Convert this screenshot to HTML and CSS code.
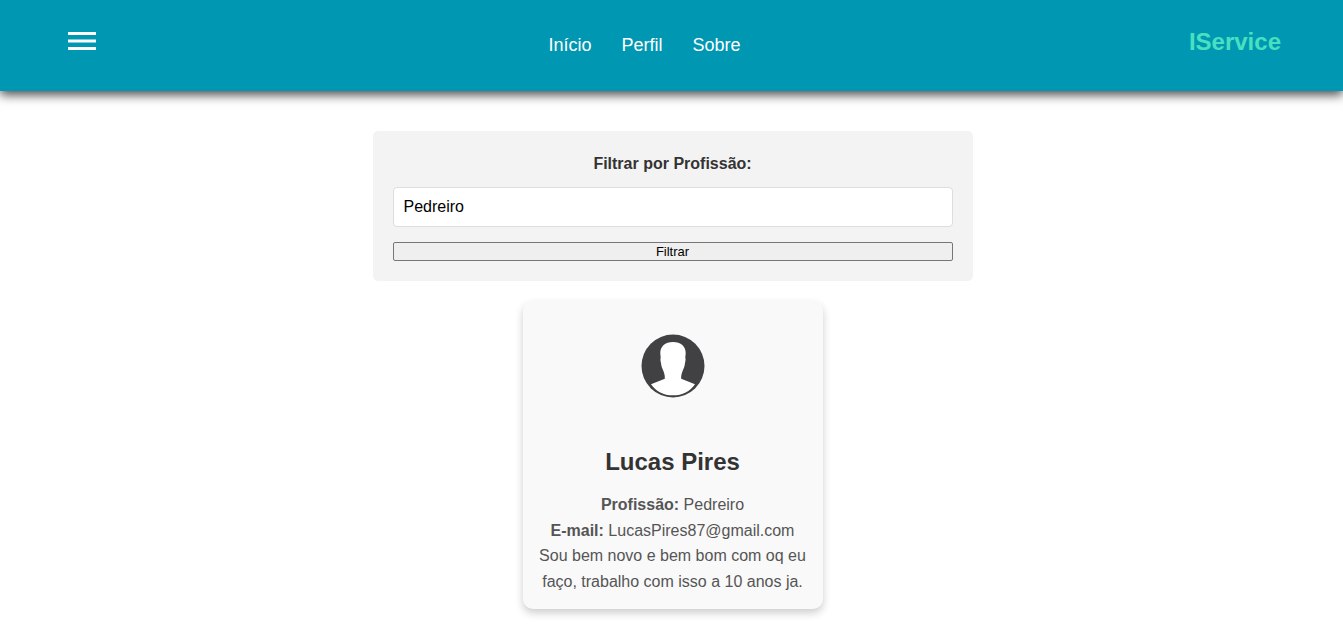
FILE: index.html
```html
<!DOCTYPE html>
<html lang="pt-BR">
<head>
  <meta charset="UTF-8">
  <meta name="viewport" content="width=device-width, initial-scale=1">
  <title>IService</title>
  <link rel="stylesheet" href="styles.css">
</head>
<body>
  <header class="header">
    <button class="menu-button" type="button" aria-label="Abrir menu">
      <svg class="menu-icon" viewBox="0 0 38 38" aria-hidden="true">
        <path fill="#fff" d="M6 10h28v3H6zM6 17.5h28v3H6zM6 25h28v3H6z"/>
      </svg>
    </button>
    <nav class="nav">
      <a class="nav-link" href="#">Início</a>
      <a class="nav-link" href="#">Perfil</a>
      <a class="nav-link" href="#">Sobre</a>
    </nav>
    <span class="logo">IService</span>
  </header>

  <main class="main">
    <form class="filter">
      <label class="filter-label" for="profissao">Filtrar por Profissão:</label>
      <input class="filter-input" type="text" id="profissao" value="Pedreiro">
      <button class="filter-button" type="button">Filtrar</button>
    </form>

    <article class="card">
      <svg class="avatar" viewBox="0 0 100 100" role="img" aria-label="Foto de perfil">
        <circle cx="50" cy="50" r="31.5" fill="#414042"/>
        <path fill="#fff" d="M50 26C42 26 37.300 30.500 37.300 37c0 2 .4 3 .4 4.500-.5 1.500-.3 3.500.3 5.500.2 3 1.300 5.500 2.400 8 1.100 2.800 1.600 5 1.400 7.800L28 68.200C33 75.500 40.500 79.300 50 79.300s17-3.800 22-11.100l-13.800-5.400c-.2-2.800.3-5 1.400-7.800 1.100-2.500 2.200-5 2.400-8 .6-2 .8-4 .3-5.500 0-1.500.4-2.500.4-4.500C62.700 30.500 58 26 50 26z"/>
      </svg>
      <h2 class="card-name">Lucas Pires</h2>
      <p class="card-text"><strong>Profissão:</strong> Pedreiro</p>
      <p class="card-text"><strong>E-mail:</strong> LucasPires87@gmail.com</p>
      <p class="card-text">Sou bem novo e bem bom com oq eu faço, trabalho com isso a 10 anos ja.</p>
    </article>
  </main>
</body>
</html>
```
FILE: styles.css
```css
* {
  box-sizing: border-box;
  margin: 0;
  padding: 0;
}

body {
  font-family: "Liberation Sans", Arial, sans-serif;
  font-size: 16px;
  line-height: 1.6;
  color: #333;
  background: #fff;
}

.header {
  display: flex;
  justify-content: space-between;
  align-items: flex-start;
  padding: 22px 62px 23px;
  background: #0097b2;
  box-shadow: 0 4px 10px rgba(0, 0, 0, 0.7);
}

.menu-button {
  border: 0;
  background: none;
  cursor: pointer;
}

.menu-icon {
  display: block;
  width: 38px;
  height: 38px;
}

.nav {
  display: flex;
  gap: 30px;
}

.nav-link {
  font-size: 18px;
  line-height: 46px;
  color: #fff;
  text-decoration: none;
}

.logo {
  font-size: 24px;
  font-weight: bold;
  line-height: 40px;
  color: #48e0c0;
}

.main {
  display: flex;
  flex-direction: column;
  align-items: center;
  gap: 20px;
  padding: 40px 20px 20px 22px;
}

.filter {
  display: flex;
  flex-direction: column;
  width: 100%;
  max-width: 600px;
  padding: 20px;
  background: #f3f3f3;
  border-radius: 5px;
}

.filter-label {
  margin-bottom: 10px;
  font-weight: bold;
  text-align: center;
}

.filter-input {
  margin-bottom: 15px;
  padding: 10px;
  border: 1px solid #ddd;
  border-radius: 4px;
  background: #fff;
  color: #000;
  font-family: inherit;
  font-size: 16px;
}

.filter-button {
  border: 1px solid #767676;
  border-radius: 2px;
  background: #efefef;
  color: #000;
  font-family: inherit;
  font-size: 13px;
  line-height: 17px;
}

.card {
  width: 100%;
  max-width: 300px;
  padding: 15px;
  background: #f9f9f9;
  border-radius: 10px;
  box-shadow: 0 4px 8px rgba(0, 0, 0, 0.2);
  text-align: center;
}

.avatar {
  display: block;
  width: 100px;
  height: 100px;
  margin: 0 auto 27px;
}

.card-name {
  margin-bottom: 11px;
  font-size: 24px;
}

.card-text {
  color: #555;
}
```
